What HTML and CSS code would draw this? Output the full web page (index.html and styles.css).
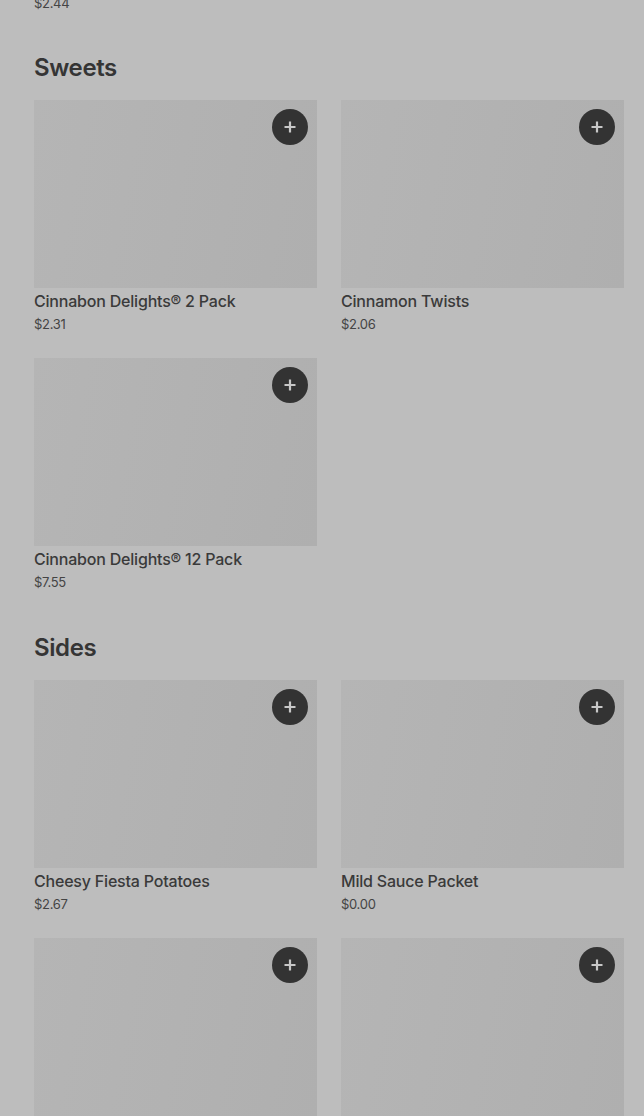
FILE: index.html
```html
<!DOCTYPE html>
<html lang="en">
<head>
    <meta charset="UTF-8">
    <meta name="viewport" content="width=device-width, initial-scale=1.0">
    <title>Menu</title>
    <link rel="stylesheet" href="styles.css">
</head>
<body>

<div class="menu">
    <div class="prev-tail">
        <span class="price">$2.44</span>
    </div>

    <section class="section">
        <h2 class="section-title">Sweets</h2>
        <div class="grid">
            <div class="item">
                <div class="thumb">
                    <button class="add" aria-label="Add">
                        <svg width="14" height="14" viewBox="0 0 14 14"><path d="M7 1.5v11M1.5 7h11" stroke="currentColor" stroke-width="2.2"/></svg>
                    </button>
                </div>
                <div class="name">Cinnabon Delights® 2 Pack</div>
                <div class="price">$2.31</div>
            </div>
            <div class="item">
                <div class="thumb">
                    <button class="add" aria-label="Add">
                        <svg width="14" height="14" viewBox="0 0 14 14"><path d="M7 1.5v11M1.5 7h11" stroke="currentColor" stroke-width="2.2"/></svg>
                    </button>
                </div>
                <div class="name">Cinnamon Twists</div>
                <div class="price">$2.06</div>
            </div>
            <div class="item">
                <div class="thumb">
                    <button class="add" aria-label="Add">
                        <svg width="14" height="14" viewBox="0 0 14 14"><path d="M7 1.5v11M1.5 7h11" stroke="currentColor" stroke-width="2.2"/></svg>
                    </button>
                </div>
                <div class="name">Cinnabon Delights® 12 Pack</div>
                <div class="price">$7.55</div>
            </div>
        </div>
    </section>

    <section class="section">
        <h2 class="section-title">Sides</h2>
        <div class="grid">
            <div class="item">
                <div class="thumb">
                    <button class="add" aria-label="Add">
                        <svg width="14" height="14" viewBox="0 0 14 14"><path d="M7 1.5v11M1.5 7h11" stroke="currentColor" stroke-width="2.2"/></svg>
                    </button>
                </div>
                <div class="name">Cheesy Fiesta Potatoes</div>
                <div class="price">$2.67</div>
            </div>
            <div class="item">
                <div class="thumb">
                    <button class="add" aria-label="Add">
                        <svg width="14" height="14" viewBox="0 0 14 14"><path d="M7 1.5v11M1.5 7h11" stroke="currentColor" stroke-width="2.2"/></svg>
                    </button>
                </div>
                <div class="name">Mild Sauce Packet</div>
                <div class="price">$0.00</div>
            </div>
            <div class="item">
                <div class="thumb">
                    <button class="add" aria-label="Add">
                        <svg width="14" height="14" viewBox="0 0 14 14"><path d="M7 1.5v11M1.5 7h11" stroke="currentColor" stroke-width="2.2"/></svg>
                    </button>
                </div>
            </div>
            <div class="item">
                <div class="thumb">
                    <button class="add" aria-label="Add">
                        <svg width="14" height="14" viewBox="0 0 14 14"><path d="M7 1.5v11M1.5 7h11" stroke="currentColor" stroke-width="2.2"/></svg>
                    </button>
                </div>
            </div>
        </div>
    </section>
</div>

</body>
</html>
```

FILE: styles.css
```css
html, body {
    margin: 0;
    padding: 0;
    height: 100%;
    overflow: hidden;
}
body {
    background-color: #bdbdbd;
    color: #383838;
    font-family: Inter, "Noto Sans", sans-serif;
}
.menu {
    padding: 0 20px 0 34px;
}
.prev-tail {
    margin-top: -8px;
    height: 20px;
    line-height: 20px;
}
.section {
    margin-top: 40px;
}
.section-title {
    margin: 0 0 16px;
    font-size: 24px;
    line-height: 32px;
    font-weight: 600;
    color: #353535;
    letter-spacing: -0.4px;
}
.grid {
    display: grid;
    grid-template-columns: 1fr 1fr;
    gap: 24px;
}
.thumb {
    position: relative;
    height: 188px;
    background: linear-gradient(100deg, #b5b5b5, #afafaf);
}
.add {
    position: absolute;
    top: 9px;
    right: 9px;
    width: 36px;
    height: 36px;
    border-radius: 50%;
    border: none;
    padding: 0;
    background-color: #333333;
    color: #c8c8c8;
    display: flex;
    align-items: center;
    justify-content: center;
    cursor: pointer;
}
.name {
    margin-top: 3px;
    font-size: 16px;
    line-height: 20px;
    font-weight: 500;
    color: #3a3a3a;
    letter-spacing: -0.2px;
}
.price {
    margin-top: 3px;
    font-size: 13px;
    line-height: 20px;
    color: #444444;
    letter-spacing: -0.3px;
}
.prev-tail .price {
    margin-top: 0;
}
```
